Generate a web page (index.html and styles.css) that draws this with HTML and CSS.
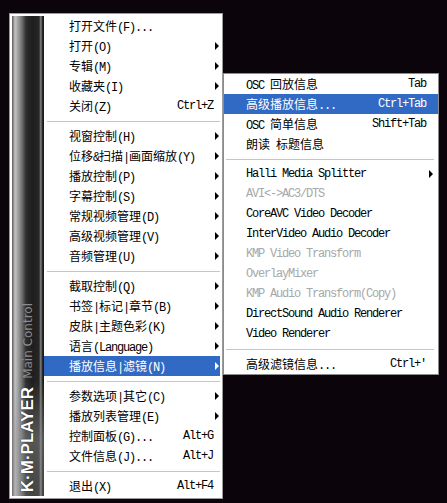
FILE: index.html
```html
<!DOCTYPE html>
<html lang="zh-CN">
<head>
    <meta charset="UTF-8">
    <title>KMPlayer Main Control</title>
    <link rel="stylesheet" href="styles.css">
</head>
<body>
    <div class="screen">
        <div class="menu main">
            <div class="side">
                <span class="title">Main Control</span>
                <span class="brand">K·M·PLAYER</span>
            </div>
            <ul class="items">
                <li class="item"><span class="label">打开文件<span class="en">(F)...</span></span></li>
                <li class="item more"><span class="label">打开<span class="en">(O)</span></span></li>
                <li class="item more"><span class="label">专辑<span class="en">(M)</span></span></li>
                <li class="item more"><span class="label">收藏夹<span class="en">(I)</span></span></li>
                <li class="item"><span class="label">关闭<span class="en">(Z)</span></span><span class="key en">Ctrl+Z</span></li>
                <li class="sep"></li>
                <li class="item more"><span class="label">视窗控制<span class="en">(H)</span></span></li>
                <li class="item more"><span class="label">位移<span class="en">&amp;</span>扫描<span class="en">|</span>画面缩放<span class="en">(Y)</span></span></li>
                <li class="item more"><span class="label">播放控制<span class="en">(P)</span></span></li>
                <li class="item more"><span class="label">字幕控制<span class="en">(S)</span></span></li>
                <li class="item more"><span class="label">常规视频管理<span class="en">(D)</span></span></li>
                <li class="item more"><span class="label">高级视频管理<span class="en">(V)</span></span></li>
                <li class="item more"><span class="label">音频管理<span class="en">(U)</span></span></li>
                <li class="sep"></li>
                <li class="item more"><span class="label">截取控制<span class="en">(Q)</span></span></li>
                <li class="item more"><span class="label">书签<span class="en">|</span>标记<span class="en">|</span>章节<span class="en">(B)</span></span></li>
                <li class="item more"><span class="label">皮肤<span class="en">|</span>主题色彩<span class="en">(K)</span></span></li>
                <li class="item more"><span class="label">语言<span class="en">(Language)</span></span></li>
                <li class="item more on"><span class="label">播放信息<span class="en">|</span>滤镜<span class="en">(N)</span></span></li>
                <li class="sep"></li>
                <li class="item more"><span class="label">参数选项<span class="en">|</span>其它<span class="en">(C)</span></span></li>
                <li class="item more"><span class="label">播放列表管理<span class="en">(E)</span></span></li>
                <li class="item"><span class="label">控制面板<span class="en">(G)...</span></span><span class="key en">Alt+G</span></li>
                <li class="item"><span class="label">文件信息<span class="en">(J)...</span></span><span class="key en">Alt+J</span></li>
                <li class="sep"></li>
                <li class="item"><span class="label">退出<span class="en">(X)</span></span><span class="key en">Alt+F4</span></li>
            </ul>
        </div>

        <ul class="menu sub items">
            <li class="item"><span class="label"><span class="en">OSC </span>回放信息</span><span class="key en">Tab</span></li>
            <li class="item on"><span class="label">高级播放信息<span class="en">...</span></span><span class="key en">Ctrl+Tab</span></li>
            <li class="item"><span class="label"><span class="en">OSC </span>简单信息</span><span class="key en">Shift+Tab</span></li>
            <li class="item"><span class="label">朗读<span class="en"> </span>标题信息</span></li>
            <li class="sep"></li>
            <li class="item more"><span class="label en">Halli Media Splitter</span></li>
            <li class="item off"><span class="label en">AVI&lt;-&gt;AC3/DTS</span></li>
            <li class="item"><span class="label en">CoreAVC Video Decoder</span></li>
            <li class="item"><span class="label en">InterVideo Audio Decoder</span></li>
            <li class="item off"><span class="label en">KMP Video Transform</span></li>
            <li class="item off"><span class="label en">OverlayMixer</span></li>
            <li class="item off"><span class="label en">KMP Audio Transform(Copy)</span></li>
            <li class="item"><span class="label en">DirectSound Audio Renderer</span></li>
            <li class="item"><span class="label en">Video Renderer</span></li>
            <li class="sep"></li>
            <li class="item"><span class="label">高级滤镜信息<span class="en">...</span></span><span class="key en">Ctrl+'</span></li>
        </ul>
    </div>
</body>
</html>
```

FILE: styles.css
```css
body {
    margin: 0;
    background-color: #0b040b;
    font: 12px "Noto Sans CJK SC", sans-serif;
    color: #000;
}
.screen {
    position: relative;
    width: 447px;
    height: 503px;
    padding: 13px 0 0 9px;
    box-sizing: border-box;
}
.menu {
    background-color: #fff;
    border: 1px solid #9b9b9b;
    padding: 2px;
    box-sizing: border-box;
}
.main {
    display: flex;
    width: 214px;
}
.side {
    flex: none;
    width: 32px;
    display: flex;
    flex-direction: column;
    justify-content: flex-end;
    align-items: center;
    gap: 8px;
    padding-bottom: 4px;
    box-sizing: border-box;
    background:
        linear-gradient(to bottom, rgba(150, 150, 150, 0) 76%, rgba(150, 150, 150, 0.45) 88%, rgba(150, 150, 150, 0.3) 100%),
        linear-gradient(to right, #5a5a5a 0, #c4c4c4 3px, #a0a0a0 6px, #6e6e6e 10px, #2e2e2e 14px, #1e1e1e 20px, #262626 27px, #8a8a8a 29px, #303030 30px, #111 32px);
}
.title, .brand {
    writing-mode: vertical-rl;
    transform: rotate(180deg);
    white-space: nowrap;
}
.title {
    font: 12px "DejaVu Sans", sans-serif;
    color: #8c8c8c;
}
.brand {
    font: bold 17px "Liberation Sans", Arial, sans-serif;
    color: #fff;
    text-shadow: 0 0 1px #000;
}
.items {
    list-style: none;
    margin: 0;
    padding: 0;
    flex: 1;
}
.item {
    position: relative;
    display: flex;
    height: 20px;
    line-height: 20px;
    padding: 0 7px 0 25px;
    white-space: nowrap;
}
.item .label {
    flex: 1;
}
.item.more::after {
    content: "";
    position: absolute;
    right: 1px;
    top: 6px;
    border-left: 4px solid #000;
    border-top: 4px solid transparent;
    border-bottom: 4px solid transparent;
}
.item.on {
    background-color: #316ac5;
    color: #fff;
}
.item.on::after {
    border-left-color: #fff;
}
.item.off {
    color: #a8a8a8;
}
.sep {
    height: 1px;
    background-color: #c5c5c5;
    margin: 5px 0 4px 3px;
}
.en {
    font-family: "Liberation Mono", "Noto Sans CJK SC", monospace;
    letter-spacing: -1.2px;
}
.sub {
    position: absolute;
    left: 223px;
    top: 73px;
    width: 216px;
    border-color: #8c8c8c;
}
.sub .item {
    padding: 0 12px 0 22px;
}
.sub .item.more::after {
    right: 5px;
}
.sub .sep {
    margin: 5px 4px 4px 2px;
}
```
